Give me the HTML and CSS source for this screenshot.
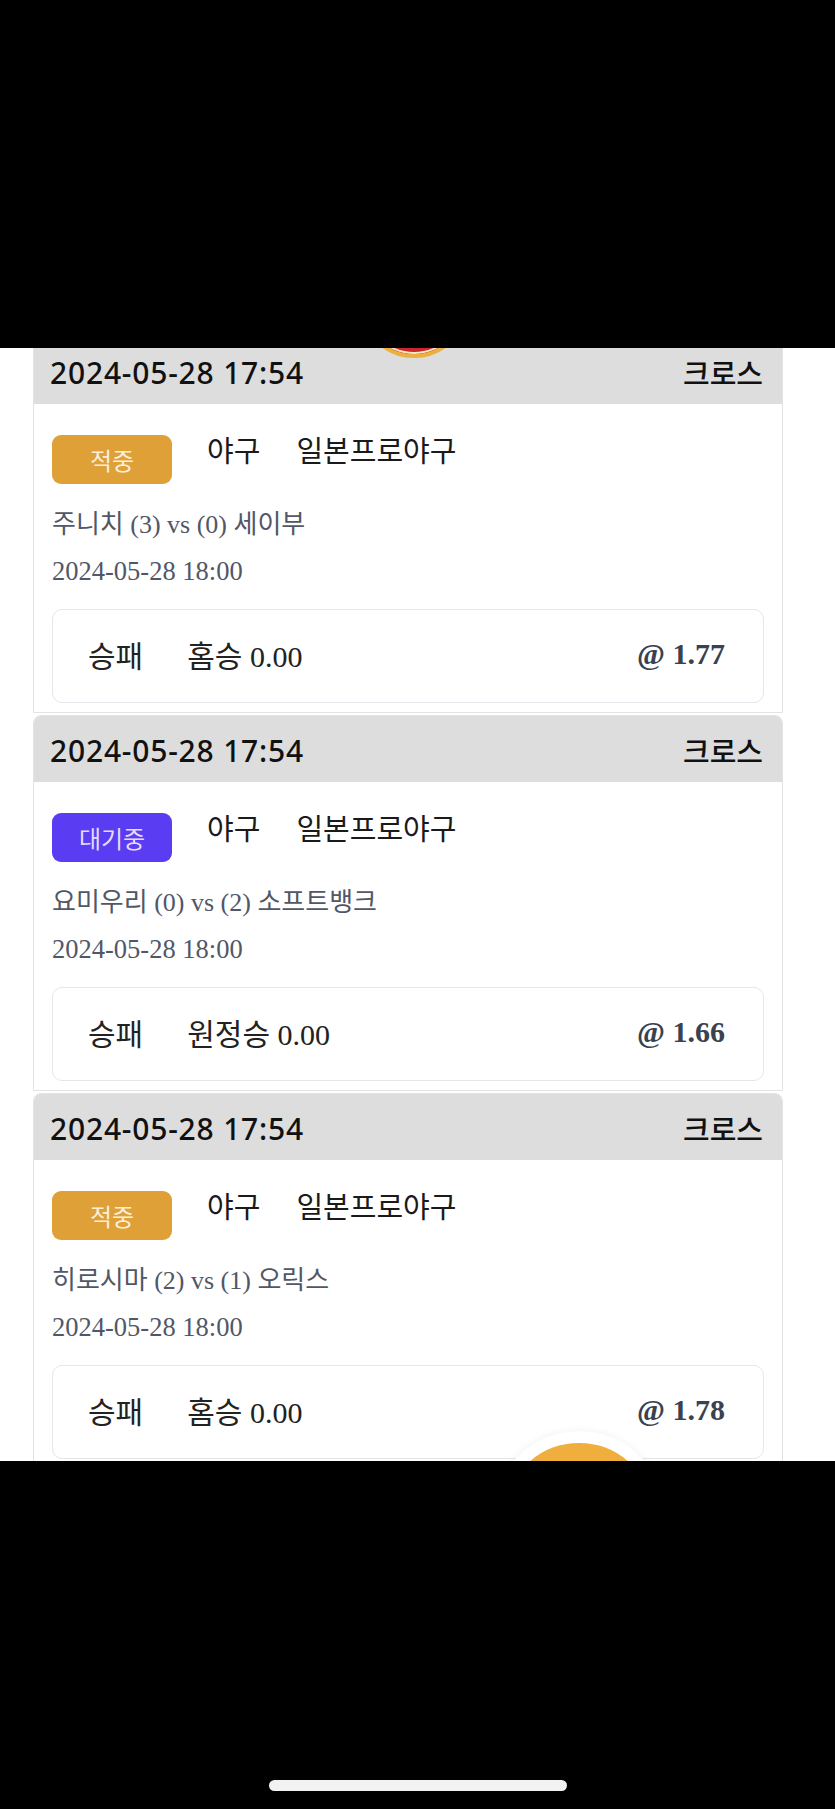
FILE: index.html
```html
<!DOCTYPE html>
<html lang="ko">
<head>
  <meta charset="UTF-8" />
  <meta name="viewport" content="width=device-width, initial-scale=1.0"/>
  <title>베팅내역</title>
  <link rel="stylesheet" href="styles.css">
</head>
<body>
  <div class="phone">
    <div class="bar-top"></div>

    <div class="screen">
      <div class="logo"></div>
      <div id="betList" class="list"></div>
      <button class="fab" aria-label="menu"></button>
    </div>

    <div class="bar-bottom">
      <span class="home-indicator"></span>
    </div>
  </div>

  <script>
    const bets = [
      { time: "2024-05-28 17:54", type: "크로스", status: "hit", sport: "야구", league: "일본프로야구",
        home: "주니치", homeScore: 3, away: "세이부", awayScore: 0, start: "2024-05-28 18:00",
        market: "승패", pick: "홈승 0.00", odds: "1.77" },
      { time: "2024-05-28 17:54", type: "크로스", status: "wait", sport: "야구", league: "일본프로야구",
        home: "요미우리", homeScore: 0, away: "소프트뱅크", awayScore: 2, start: "2024-05-28 18:00",
        market: "승패", pick: "원정승 0.00", odds: "1.66" },
      { time: "2024-05-28 17:54", type: "크로스", status: "hit", sport: "야구", league: "일본프로야구",
        home: "히로시마", homeScore: 2, away: "오릭스", awayScore: 1, start: "2024-05-28 18:00",
        market: "승패", pick: "홈승 0.00", odds: "1.78" }
    ];

    const statusText = { hit: "적중", wait: "대기중" };
    const betList = document.getElementById("betList");

    function renderBets() {
      betList.innerHTML = "";

      bets.forEach((bet) => {
        const card = document.createElement("div");
        card.className = "card";

        card.innerHTML = `
          <div class="card-head">
            <span class="bet-time">${bet.time}</span>
            <span class="bet-type">${bet.type}</span>
          </div>
          <div class="card-body">
            <div class="league-row">
              <span class="badge ${bet.status}">${statusText[bet.status]}</span>
              <span class="sport">${bet.sport}</span>
              <span class="league">${bet.league}</span>
            </div>
            <p class="teams">${bet.home} (${bet.homeScore}) vs (${bet.awayScore}) ${bet.away}</p>
            <p class="kickoff">${bet.start}</p>
            <div class="pick">
              <span class="market">${bet.market}</span>
              <span class="choice">${bet.pick}</span>
              <span class="odds">@ ${bet.odds}</span>
            </div>
          </div>
        `;

        betList.appendChild(card);
      });
    }

    renderBets();
  </script>
</body>
</html>
```

FILE: styles.css
```css
* {
  box-sizing: border-box;
}

body {
  margin: 0;
  padding: 0;
  background: #000;
  font-family: "Noto Sans CJK KR", sans-serif;
}

.phone {
  width: 835px;
  height: 1809px;
  display: flex;
  flex-direction: column;
}

.bar-top {
  height: 348px;
  background: #000;
}

.screen {
  position: relative;
  height: 1113px;
  background: #fff;
  overflow: hidden;
}

/* site logo peeking out above the list */
.logo {
  position: absolute;
  top: -100px;
  left: 359px;
  width: 110px;
  height: 110px;
  border-radius: 50%;
  border: 4px solid #eab040;
  background: #c8282c;
  box-shadow: inset 0 0 0 2px #fbe7c4;
  z-index: 2;
}

.list {
  margin-top: -11px;
}

.card {
  width: 750px;
  margin: 0 0 2px 33px;
  border: 1px solid #e3e3e3;
  border-radius: 8px 8px 0 0;
  overflow: hidden;
  background: #fff;
}

.card-head {
  height: 66px;
  display: flex;
  justify-content: space-between;
  align-items: center;
  padding: 2px 19px 0 16px;
  background: #dddddd;
  color: #111;
}

.bet-time {
  font-family: "Noto Sans", "Noto Sans CJK KR", sans-serif;
  font-size: 30px;
  font-weight: 500;
  letter-spacing: 0.8px;
}

.bet-type {
  font-family: "Noto Sans CJK KR", sans-serif;
  font-size: 29px;
  font-weight: 500;
}

.card-body {
  padding: 31px 18px 9px 18px;
}

.league-row {
  display: flex;
  align-items: flex-start;
}

.badge {
  width: 120px;
  height: 49px;
  display: flex;
  align-items: center;
  justify-content: center;
  border-radius: 9px;
  font-size: 24px;
}

.badge.hit {
  background: #dfa037;
  color: #fcefd6;
}

.badge.wait {
  background: #5a3cf2;
  color: #e2ddff;
}

.sport,
.league {
  font-size: 29px;
  line-height: 28px;
  color: #1a1a1a;
}

.sport {
  margin-left: 35px;
}

.league {
  margin-left: 36px;
}

.teams,
.kickoff {
  margin: 0;
  font-family: "Liberation Serif", "Noto Sans CJK KR", serif;
  color: #515767;
  line-height: 30px;
}

.teams {
  margin-top: 26px;
  font-size: 26px;
}

.kickoff {
  margin-top: 16px;
  font-size: 26.5px;
}

.pick {
  margin-top: 23px;
  height: 94px;
  display: flex;
  align-items: center;
  padding: 0 38px 5px 35px;
  border: 1px solid #e4e6eb;
  border-radius: 10px;
  font-family: "Liberation Serif", "Noto Sans CJK KR", serif;
  font-size: 30px;
  color: #222;
}

.choice {
  margin-left: 44px;
}

.odds {
  margin-left: auto;
  font-size: 30px;
  font-weight: bold;
  color: #3a4150;
}

.fab {
  position: absolute;
  top: 1083px;
  left: 492px;
  width: 174px;
  height: 174px;
  padding: 0;
  border: 12px solid #fff;
  border-radius: 50%;
  background: #f0ae3c;
  box-shadow: 0 0 8px rgba(0,0,0,0.06);
  cursor: pointer;
}

.bar-bottom {
  flex: 1;
  display: flex;
  justify-content: center;
  align-items: flex-end;
  padding-bottom: 18px;
  background: #000;
}

.home-indicator {
  width: 298px;
  height: 11px;
  border-radius: 6px;
  background: #f2f2f2;
}
```
